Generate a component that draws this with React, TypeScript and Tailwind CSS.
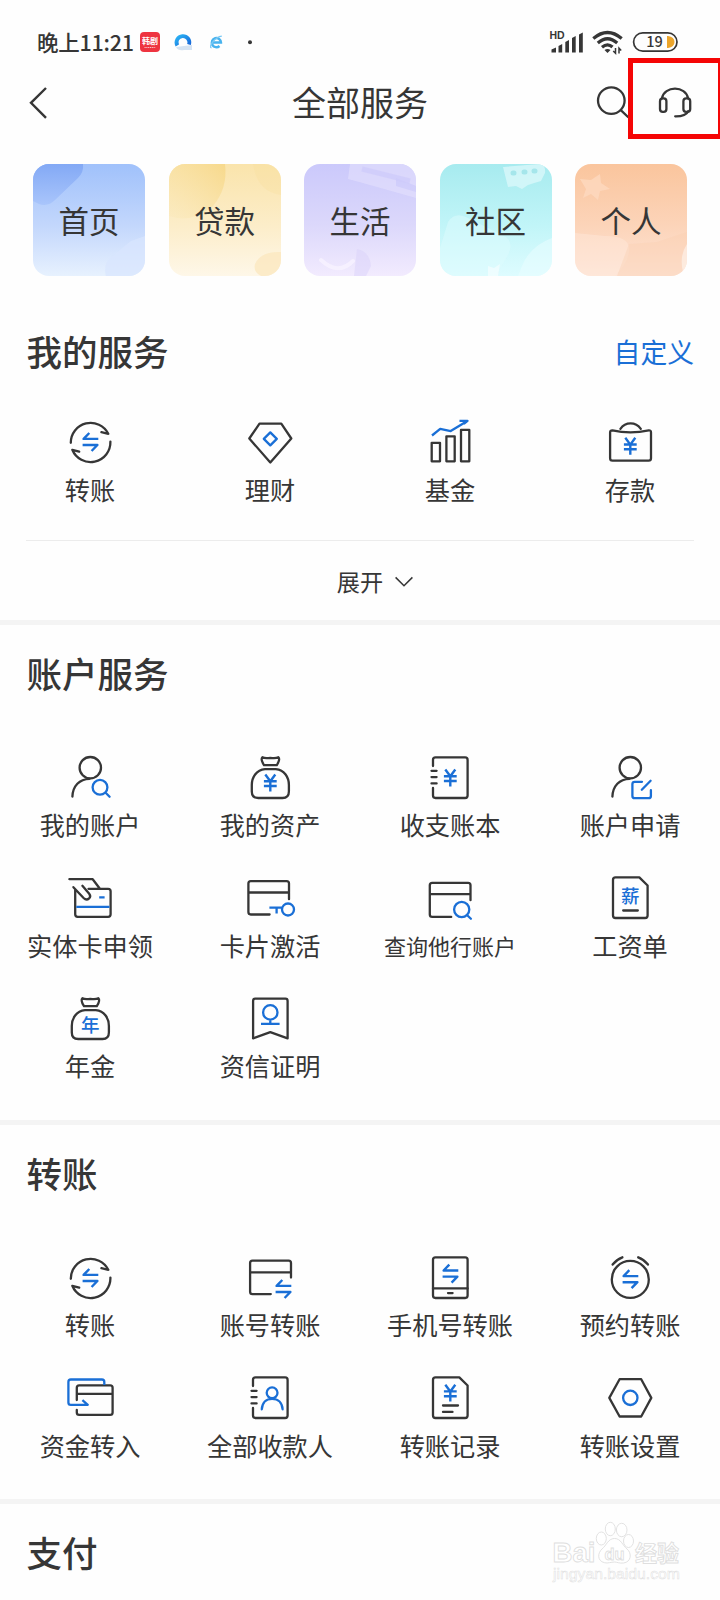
import React from "react";

const INK = "#363636";
const BLUE = "#1a6fd6";

function Icon({ children }: { children: React.ReactNode }) {
  return (
    <svg
      className="mt-[0.8px] h-12 w-12 shrink-0 overflow-visible"
      viewBox="0 0 48 48"
      fill="none"
      stroke={INK}
      strokeWidth="2.3"
      strokeLinecap="round"
      strokeLinejoin="round"
    >
      {children}
    </svg>
  );
}

function Yen({ y = 0 }: { y?: number }) {
  return (
    <path
      transform={`translate(24.3 ${y})`}
      stroke={BLUE}
      strokeWidth="2.4"
      strokeLinecap="butt"
      d="M-5 -8.3L0 -1.5L5 -8.3M0 -2V8.6M-6.4 -1.6H6.4M-6.4 3.2H6.4"
    />
  );
}

function Swap({ x = 0, y = 0 }: { x?: number; y?: number }) {
  return (
    <path
      transform={`translate(${x} ${y})`}
      stroke={BLUE}
      strokeWidth="2.4"
      strokeLinecap="butt"
      d="M32.3 20.9H17.6L23.3 15M16.6 27H31.4L25.6 33"
    />
  );
}

function Glyph({ text, y }: { text: string; y: number }) {
  return (
    <text
      x="24.3"
      y={y}
      textAnchor="middle"
      fontSize="18.5"
      fontWeight="500"
      fill={BLUE}
      stroke="none"
    >
      {text}
    </text>
  );
}

function Bag() {
  return (
    <>
      <path d="M16.4 3.2C19 4.8 21.5 4 24.3 4C27 4 29.8 4.8 32.4 3.2C34.2 5 32.8 8 30.8 11.2H18C16 8 14.6 5 16.4 3.2Z" />
      <path d="M19 15.2H29.8C38.5 15.8 42.9 23.5 42.9 31V37.5C42.9 42 41 44 36.5 44H12.2C7.7 44 5.8 42 5.8 37.5V31C5.8 23.5 10.3 15.8 19 15.2Z" />
    </>
  );
}

function User() {
  return (
    <>
      <circle cx="24.3" cy="13.7" r="10.7" />
      <path d="M6.4 42.6C6.8 32 13.5 25 23.5 24.8" />
    </>
  );
}

const Doc = () => (
  <path d="M9.5 3.4H33.3L41.6 11.5V41.5Q41.6 44 39.1 44H9.5Q7 44 7 41.5V5.9Q7 3.4 9.5 3.4Z" />
);

const Notebook = () => (
  <path d="M7 12V5.8Q7 3.4 9.5 3.4H39.1Q41.6 3.4 41.6 5.9V41.5Q41.6 44 39.1 44H9.5Q7 44 7 41.6V34M5.5 16.8H10.6M5.5 23.1H10.6M5.5 29.4H10.6" />
);

const icons: Record<string, React.ReactNode> = {
  transfer: (
    <>
      <path d="M4.8 24.8A19.8 19.8 0 0 1 42.3 15.8L35.4 14.2M44.4 23.6A19.8 19.8 0 0 1 6.3 31.8L13.2 33.7" />
      <Swap />
    </>
  ),
  wealth: (
    <>
      <path d="M13.5 5.7H35.3L45.3 20.5L24.3 44.5L3.3 20.5Z" />
      <path d="M24.3 14.4L30.8 20.9L24.3 27.4L17.8 20.9Z" stroke={BLUE} />
    </>
  ),
  fund: (
    <>
      <rect x="5.7" y="24.8" width="8.3" height="18.5" />
      <rect x="20.4" y="18.3" width="8.3" height="25" />
      <rect x="35" y="11.9" width="8.3" height="31.4" />
      <path d="M6 17.5L14.2 10.9L24.7 13.1L40.5 3.4M33.5 2.8H41.5L37.8 6" stroke={BLUE} strokeLinecap="butt" />
    </>
  ),
  deposit: (
    <>
      <path d="M6.4 12.3Q24.3 16.5 42.8 12.3Q45 12.2 45 14.6V40.2Q45 42.6 42.6 42.6H6.5Q4.1 42.6 4.1 40.2V14.6Q4.1 12.2 6.4 12.3ZM14.4 10.8C19.5 3.6 29.6 3.6 34.8 10.8" />
      <Yen y={28.1} />
    </>
  ),
  account: (
    <>
      <User />
      <path d="M39.4 38.5L43.6 42.8M41.4 33.3A7.4 7.4 0 1 1 26.6 33.3A7.4 7.4 0 1 1 41.4 33.3" stroke={BLUE} />
    </>
  ),
  assets: (
    <>
      <Bag />
      <Yen y={28.8} />
    </>
  ),
  ledger: (
    <>
      <Notebook />
      <Yen y={23.8} />
    </>
  ),
  apply: (
    <>
      <User />
      <path d="M36 27.8H28.7Q26.4 27.8 26.4 30.1V41.9Q26.4 44.2 28.7 44.2H42.6Q44.9 44.2 44.9 41.9V36.2M35.8 35.8L44.6 26.8" stroke={BLUE} />
    </>
  ),
  handCard: (
    <>
      <path d="M3.4 5.2H26.7L33.9 14.8M22.5 14.8H42.1Q44.6 14.8 44.6 17.3V40.3Q44.6 42.8 42.1 42.8H11.7Q9.2 42.8 9.2 40.3V15.5M7.4 13.2L17.6 24C19.4 25.8 21.6 25.8 23.1 24.4C24.6 22.9 24.6 21.4 23.2 19.7L16.4 11.8" />
      <path d="M10.3 32.8H43.5M33.2 23.4H38.6" stroke={BLUE} strokeLinecap="butt" />
    </>
  ),
  keyCard: (
    <>
      <path d="M43 25.2V9.6Q43 7.2 40.6 7.2H4.8Q2.4 7.2 2.4 9.6V38.1Q2.4 40.5 4.8 40.5H23.6M2.4 18.5H43" />
      <path d="M23.4 33.6H36.3M30.6 33.6V39.4M48 35.5A6 6 0 1 1 36 35.5A6 6 0 1 1 48 35.5" stroke={BLUE} strokeLinecap="butt" />
    </>
  ),
  searchCard: (
    <>
      <path d="M44.5 26.2V11.2Q44.5 8.8 42.1 8.8H6.2Q3.8 8.8 3.8 11.2V40.5Q3.8 42.9 6.2 42.9H25.2M3.8 20.2H44.5" />
      <path d="M41.2 41.2L44.9 44.8M43.3 35.5A7.6 7.6 0 1 1 28.1 35.5A7.6 7.6 0 1 1 43.3 35.5" stroke={BLUE} />
    </>
  ),
  payslip: (
    <>
      <Doc />
      <Glyph text="薪" y={28.8} />
      <path d="M17.2 36.5H31.8" />
    </>
  ),
  annuity: (
    <>
      <Bag />
      <Glyph text="年" y={37} />
    </>
  ),
  certificate: (
    <>
      <path d="M9.2 3.7H39.4Q41.6 3.7 41.6 5.9V43.4L24.3 37.2L7.1 43.4V5.9Q7.1 3.7 9.2 3.7Z" />
      <path d="M31.5 17.4A7.2 7.2 0 1 1 17.1 17.4A7.2 7.2 0 1 1 31.5 17.4M24.3 24.6V28.7M15 28.8H33.6" stroke={BLUE} strokeLinecap="butt" />
    </>
  ),
  cardTransfer: (
    <>
      <path d="M45 23.6V9.1Q45 6.7 42.6 6.7H6.5Q4.1 6.7 4.1 9.1V37.7Q4.1 40.1 6.5 40.1H24.8M4.1 18.4H45" />
      <Swap x={13} y={11} />
    </>
  ),
  phone: (
    <>
      <rect x="7" y="3.4" width="34.6" height="40.6" rx="2.4" />
      <path d="M7 34.4H41.6M22 39.1H26.6" />
      <Swap y={-4.4} />
    </>
  ),
  alarm: (
    <>
      <circle cx="24.3" cy="25.4" r="18.5" />
      <path d="M6.6 10.5Q10.6 5.5 16.4 3.3M32.2 3.3Q38 5.5 42 10.5" />
      <Swap y={1.2} />
    </>
  ),
  moveIn: (
    <>
      <path d="M10.8 26V13.8Q10.8 11.4 13.2 11.4H44.2Q46.6 11.4 46.6 13.8V38.5Q46.6 40.9 44.2 40.9H13.2Q10.8 40.9 10.8 38.5V36M10.8 19.9H46.6" />
      <path d="M38.3 11V7.9Q38.3 5.5 35.9 5.5H4.8Q2.4 5.5 2.4 7.9V28.4Q2.4 30.8 4.8 30.8H21.8L16.4 26.2" stroke={BLUE} strokeLinecap="butt" />
    </>
  ),
  payees: (
    <>
      <Notebook />
      <path d="M31.5 18.8A5.4 5.4 0 1 1 20.7 18.8A5.4 5.4 0 1 1 31.5 18.8M15.8 35.3C16.2 28.8 20 24.8 26.1 24.8C32.2 24.8 36.2 28.8 36.6 35.3" stroke={BLUE} />
    </>
  ),
  records: (
    <>
      <Doc />
      <Yen y={19} />
      <path d="M17 31.5H32M17 37.9H26.5" />
    </>
  ),
  settings: (
    <>
      <path d="M13.6 5.2H35.2L45.3 23.9L35.2 42.5H13.6L3.3 23.9Z" />
      <circle cx="24.3" cy="23.8" r="7.2" stroke={BLUE} />
    </>
  ),
};

type Item = [icon: string, label: string];

function ServiceGrid({ items }: { items: Item[] }) {
  return (
    <div className="grid auto-rows-[120.5px] grid-cols-4">
      {items.map(([icon, label]) => (
        <div key={label} className="flex flex-col items-center">
          <Icon>{icons[icon]}</Icon>
          <span
            className={
              label.length > 5
                ? "mt-[4.7px] text-[22px] leading-9 whitespace-nowrap"
                : "mt-[4.7px] text-[25.2px] leading-9 whitespace-nowrap"
            }
          >
            {label}
          </span>
        </div>
      ))}
    </div>
  );
}

function SectionTitle({ title, action }: { title: string; action?: string }) {
  return (
    <div className="flex h-24 items-center justify-between pr-[26px] pl-[26.5px]">
      <h2 className="text-[35.5px] leading-none font-medium">{title}</h2>
      {action && <a className="pt-[2px] text-[26.8px] leading-none text-[#1a6fd6]">{action}</a>}
    </div>
  );
}

const Band = () => <div className="h-[5px] shrink-0 bg-[#f4f4f4]" />;

function StatusBar() {
  return (
    <div className="flex h-[58px] items-center pt-[26px] pr-[32px] pl-[37px]">
      <span className="text-[21.5px] leading-8 font-medium tracking-[-0.25px] whitespace-nowrap">晚上11:21</span>
      <div className="ml-auto flex items-center">
        <svg className="h-8 w-[140px]" viewBox="548 26 140 32" fill="none">
          <text x="549.5" y="38.8" fontSize="10.5" fontWeight="700" fill={INK} fontFamily="Liberation Sans, sans-serif">HD</text>
          <path d="M551.5 52.5V49.5L556 47.5V52.5ZM558.5 52.5V46L562.2 44V52.5ZM565.3 52.5V42L569 40V52.5ZM572 52.5V38L575.7 36V52.5ZM579 52.5V34.5L582.8 32.5V52.5Z" fill={INK} />
          <path d="M593.3 38.5Q607.5 26.5 621.7 38.5M597.8 43Q607.5 34.5 617.2 43M602 47.2Q607.5 42.5 612.5 47" stroke={INK} strokeWidth="3.2" />
          <path d="M604.5 50Q607.5 47.8 610.5 50L607.5 53Z" fill={INK} />
          <path d="M615.5 48V53.2L613.2 51M619 53.5V48.2L621.2 50.5" stroke={INK} strokeWidth="1.5" />
          <rect x="633.6" y="32.8" width="43.4" height="18.4" rx="9.2" stroke={INK} strokeWidth="1.7" />
          <path d="M667 36H668Q674.5 37 674.5 42T668 48H667Z" fill="#eba52c" />
          <text x="654.5" y="47.3" fontSize="14.5" fontWeight="500" textAnchor="middle" fill={INK}>19</text>
        </svg>
      </div>
    </div>
  );
}

function AppBadges() {
  return (
    <svg className="absolute top-[28px] left-[136px] h-7 w-[120px]" viewBox="136 28 120 28" fill="none">
      <defs>
        <linearGradient id="ring" x1="0" y1="0" x2="1" y2="1">
          <stop offset="0" stopColor="#2bb4f5" />
          <stop offset="1" stopColor="#1766d8" />
        </linearGradient>
      </defs>
      <rect x="140" y="32" width="20" height="20" rx="4" fill="#ee3440" />
      <text x="150" y="43.8" fontSize="8" fontWeight="700" textAnchor="middle" fill="#fff">韩剧</text>
      <path d="M144.5 47.5H155.5" stroke="#fff" strokeWidth="1.2" strokeDasharray="1.2 .6" opacity=".7" />
      <path d="M176 47Q178 51 184 50H192V45Z" fill="#d5e3f2" />
      <path d="M177.3 45.5A6.4 6.4 0 1 1 189 44.5" stroke="url(#ring)" strokeWidth="3.8" />
      <path d="M212.6 42.5H221A4.6 4.6 0 1 0 219.5 46" stroke="#48b3ee" strokeWidth="2.4" />
      <path d="M211.5 48C208 47 215 37 221.8 36.2" stroke="#79c8f4" strokeWidth="1.3" />
      <circle cx="250" cy="42.2" r="2" fill={INK} />
    </svg>
  );
}

function Header() {
  return (
    <header className="flex h-[90px] items-center justify-between pr-[28px] pl-[28px]">
      <svg className="h-9 w-[96px]" viewBox="28 84 96 36" fill="none" stroke={INK} strokeWidth="2.4">
        <path d="M46 87L31 101.8L46 116.8" />
      </svg>
      <h1 className="-mt-px text-[34px] leading-none">全部服务</h1>
      <svg className="h-9 w-[96px] overflow-visible" viewBox="596 84 96 36" fill="none" stroke={INK} strokeWidth="2.3" strokeLinecap="round">
        <circle cx="611.3" cy="99.6" r="13.3" />
        <path d="M620.8 109.2L628 116" />
        <path d="M662 97.3C664 84.5 686 84.5 688 97.3M688.2 110.2C686.5 114 682 115.4 675.2 115.3" />
        <rect x="660" y="97.4" width="6.4" height="13.4" rx="2.8" />
        <rect x="683.4" y="97.4" width="6.8" height="13.4" rx="2.8" />
      </svg>
    </header>
  );
}

function Tile({ label, tone, children }: { label: string; tone: string; children: React.ReactNode }) {
  return (
    <div className={`relative flex h-28 w-28 items-center justify-center overflow-hidden rounded-[16px] bg-linear-to-b ${tone}`}>
      <svg className="absolute inset-0 h-28 w-28" viewBox="0 0 112 112" fill="none">
        {children}
      </svg>
      <span className="relative pt-[1px] text-[30.5px] leading-none">{label}</span>
    </div>
  );
}

function Tiles() {
  return (
    <nav className="flex justify-between pt-[17px] pr-[33px] pl-[33px]">
      <Tile label="首页" tone="from-[#a0c1fb] via-[#c3d7fc] via-55% to-[#e7f1fe]">
        <defs>
          <linearGradient id="b" x1="0" y1="0" x2="0" y2="1">
            <stop offset="0" stopColor="#83a9f5" />
            <stop offset="1" stopColor="#a9c5fb" />
          </linearGradient>
        </defs>
        <path d="M0 0H50Q51 8 45 14L22 36Q15 43 6 40L0 37Z" fill="url(#b)" />
        <path d="M112 72L98 77L77 94Q70 101 73 112H112Z" fill="#d8e5fd" opacity=".7" />
      </Tile>
      <Tile label="贷款" tone="from-[#fae4ab] via-[#fcedc9] via-55% to-[#fef7e8]">
        <defs>
          <linearGradient id="g" x1="1" y1="0" x2="0" y2="1">
            <stop offset="0" stopColor="#f7d98c" />
            <stop offset="1" stopColor="#fae7b6" stopOpacity=".3" />
          </linearGradient>
        </defs>
        <path d="M0 0H56Q59 24 44 42Q22 60 0 52Z" fill="url(#g)" />
        <path d="M84 0Q88 28 112 31V0Z" fill="#f9de9b" opacity=".3" />
        <path d="M86 100Q92 87 112 88V112H92Q84 108 86 100Z" fill="#fbe7bd" opacity=".75" />
      </Tile>
      <Tile label="生活" tone="from-[#cbc9fb] via-[#dcd8fb] via-55% to-[#f2ebfe]">
        <path d="M46 0L44 15Q70 22 112 34V28L92 22V14L112 22V8Q106 2 98 0Z" fill="#e5e2fe" opacity=".55" />
        <path d="M58 5L106 17" stroke="#cdcbfb" strokeWidth="5" opacity=".7" />
        <path d="M17 96Q34 112 49 97" stroke="#f7f3ff" strokeWidth="4" strokeLinecap="round" opacity=".8" />
        <path d="M53 85Q66 88 67 102L62 112H50Z" fill="#d9d2fa" opacity=".5" />
      </Tile>
      <Tile label="社区" tone="from-[#a7ebef] via-[#c1f5f8] via-55% to-[#defcff]">
        <path d="M63 3L100 0Q106 1 105 9L101 17Q94 19 88 21L82 25L76 22L68 23Z" fill="#d9f8fa" opacity=".8" />
        <path d="M73 9H74M84 8H85M94 7H95" stroke="#a5e6eb" strokeWidth="5" strokeLinecap="round" />
        <path d="M8 58Q14 48 26 53L60 70Q76 76 68 91L56 112H0V84Z" fill="#ddfbfd" opacity=".5" />
        <path d="M112 74Q90 82 82 102L78 112H112Z" fill="#eafeff" opacity=".55" />
        <path d="M48 102L54 104L60 100L58 112H48Z" fill="#fff" opacity=".5" />
      </Tile>
      <Tile label="个人" tone="from-[#fac59d] via-[#fcd4b9] via-55% to-[#fee5d7]">
        <path d="M5 15L16 16L25 10L26 19L35 25L25 27L23 36L16 30L8 34L11 25Z" fill="#fddac0" opacity=".75" />
        <path d="M0 69L30 72Q55 72 54 86Q54 98 40 112H0Z" fill="#fee9dc" opacity=".45" />
        <path d="M54 80L82 78L112 68V112H42Z" fill="#fbd0b2" opacity=".4" />
        <path d="M112 80Q104 92 108 108L112 112Z" fill="#fff" opacity=".45" />
      </Tile>
    </nav>
  );
}

function Watermark() {
  return (
    <svg
      className="absolute top-[1518px] left-[548px] h-[70px] w-[140px]"
      viewBox="548 1518 140 70"
      fill="#fff"
      stroke="#dfdfdf"
      strokeWidth=".9"
    >
      <text x="552.5" y="1562" fontSize="28" fontWeight="700" textLength="43" lengthAdjust="spacingAndGlyphs" fontFamily="Liberation Sans, sans-serif">Bai</text>
      <ellipse cx="601.3" cy="1538.5" rx="5" ry="6.5" />
      <ellipse cx="610.3" cy="1529" rx="5" ry="6.7" />
      <ellipse cx="621.7" cy="1530" rx="5.3" ry="6.7" />
      <ellipse cx="628.5" cy="1541" rx="5" ry="6.5" />
      <path d="M614.5 1538.5C621 1538.5 622.5 1545.5 627 1549C632 1553 631.5 1562 623.5 1563C619 1563.5 617 1562 614.5 1562C611 1562 608 1563.6 604.5 1562.7C597 1561 597.5 1553 602 1549C606.5 1545.5 608 1538.5 614.5 1538.5Z" />
      <text x="604.5" y="1559.5" fontSize="17" fontWeight="700" textLength="20" lengthAdjust="spacingAndGlyphs" fontFamily="Liberation Sans, sans-serif">du</text>
      <text x="635" y="1560.5" fontSize="22" fontWeight="700" textLength="44" lengthAdjust="spacingAndGlyphs">经验</text>
      <text x="553" y="1579" fontSize="15.5" textLength="127" lengthAdjust="spacingAndGlyphs" strokeWidth=".5" fontFamily="Liberation Sans, sans-serif">jingyan.baidu.com</text>
    </svg>
  );
}

export default function App() {
  return (
    <div className="relative flex h-[1600px] w-[720px] flex-col overflow-hidden bg-[#fefefe] font-['Noto_Sans_CJK_SC',sans-serif] text-[#363636]">
      <StatusBar />
      <Header />
      <Tiles />

      <section className="mt-[27px] flex h-[317px] shrink-0 flex-col">
        <SectionTitle title="我的服务" action="自定义" />
        <div className="h-[125px] pt-[18.5px]">
          <ServiceGrid
            items={[
              ["transfer", "转账"],
              ["wealth", "理财"],
              ["fund", "基金"],
              ["deposit", "存款"],
            ]}
          />
        </div>
        <div className="mx-[26px] mt-[16px] h-px bg-[#ececec]" />
        <div className="flex h-[79px] items-center justify-center gap-3 pt-[2px] pl-[30px]">
          <span className="text-[23.2px] leading-none">展开</span>
          <svg className="h-3 w-[18px]" viewBox="0 0 18 12" fill="none" stroke={INK} strokeWidth="1.5">
            <path d="M.6 1.4L9 9.8L17.4 1.4" />
          </svg>
        </div>
      </section>

      <Band />
      <section className="h-[495px] shrink-0">
        <SectionTitle title="账户服务" />
        <div className="pt-8">
          <ServiceGrid
            items={[
              ["account", "我的账户"],
              ["assets", "我的资产"],
              ["ledger", "收支账本"],
              ["apply", "账户申请"],
              ["handCard", "实体卡申领"],
              ["keyCard", "卡片激活"],
              ["searchCard", "查询他行账户"],
              ["payslip", "工资单"],
              ["annuity", "年金"],
              ["certificate", "资信证明"],
            ]}
          />
        </div>
      </section>

      <Band />
      <section className="h-[374px] shrink-0">
        <SectionTitle title="转账" />
        <div className="pt-8">
          <ServiceGrid
            items={[
              ["transfer", "转账"],
              ["cardTransfer", "账号转账"],
              ["phone", "手机号转账"],
              ["alarm", "预约转账"],
              ["moveIn", "资金转入"],
              ["payees", "全部收款人"],
              ["records", "转账记录"],
              ["settings", "转账设置"],
            ]}
          />
        </div>
      </section>

      <Band />
      <section className="shrink-0">
        <SectionTitle title="支付" />
      </section>

      <AppBadges />
      <div className="absolute top-[58px] left-[628px] h-[81px] w-[95px] border-[5px] border-[#f50505]" />
      <Watermark />
    </div>
  );
}
